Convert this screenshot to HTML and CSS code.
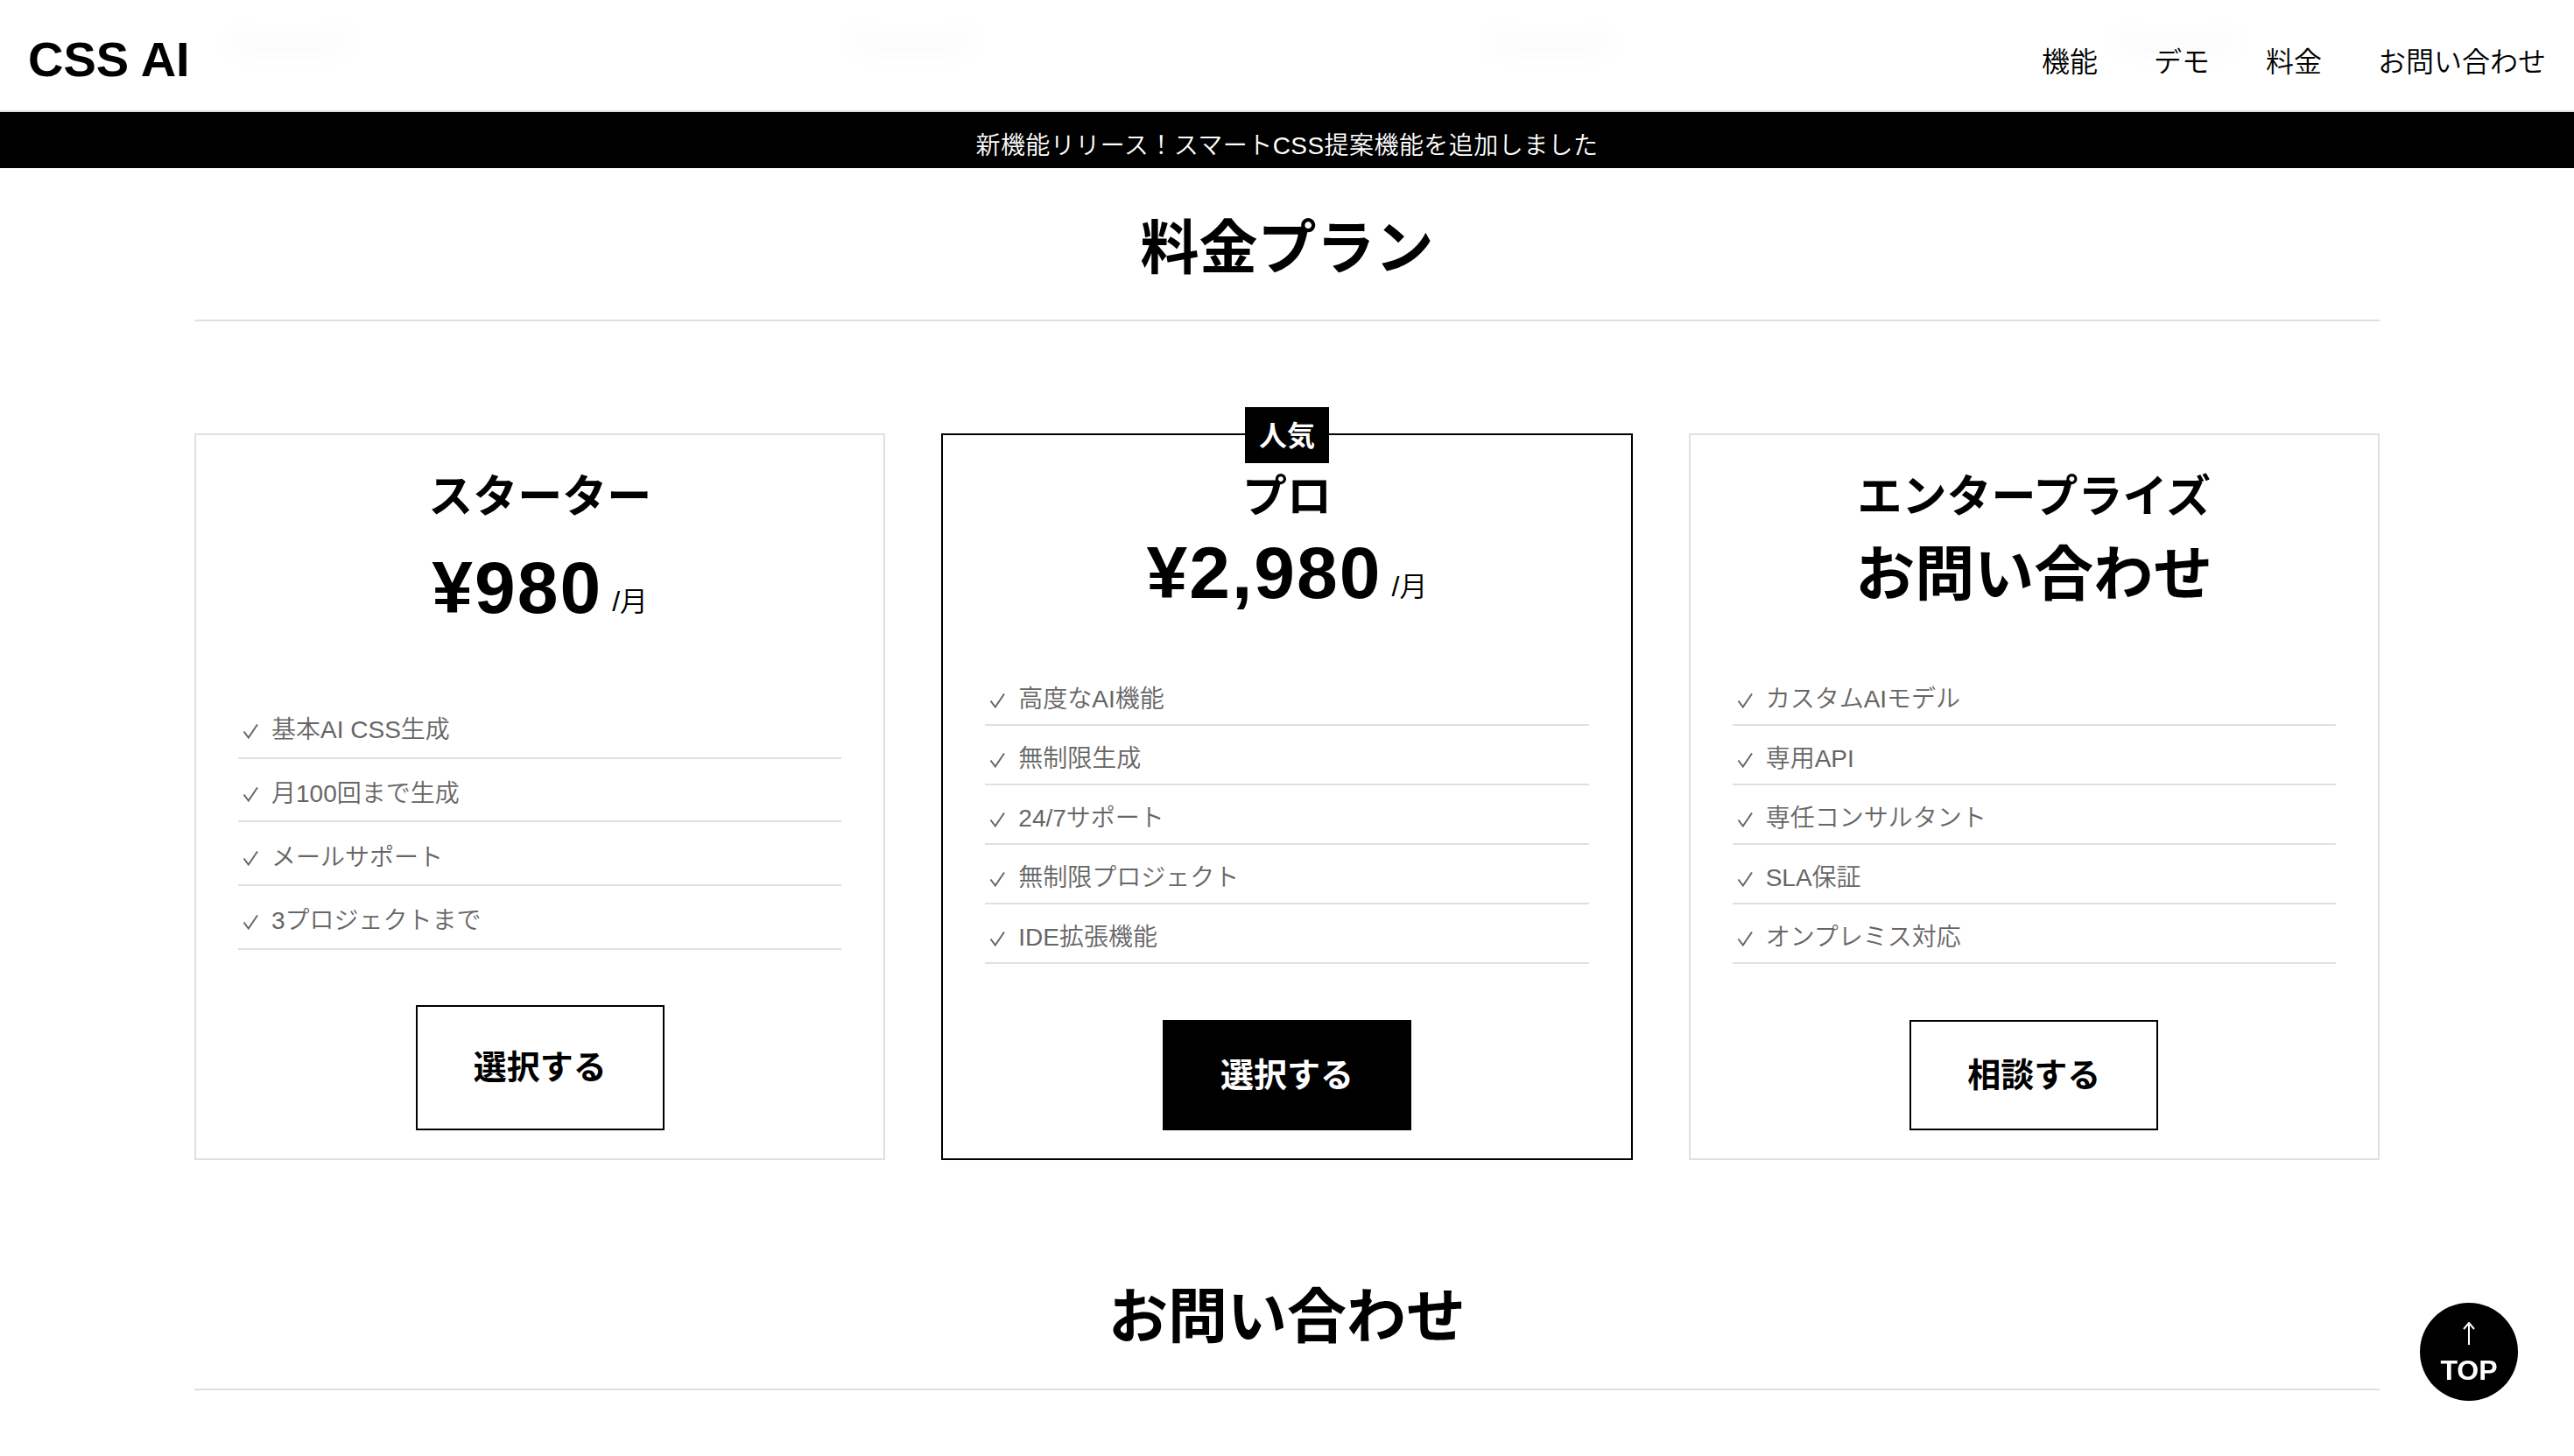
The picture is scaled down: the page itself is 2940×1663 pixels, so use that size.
FILE: index.html
```html
<!DOCTYPE html>
<html lang="ja">
<head>
  <meta charset="UTF-8" />
  <meta name="viewport" content="width=device-width, initial-scale=1.0" />
  <title>CSS AI</title>
  <link rel="stylesheet" href="styles.css">
</head>
<body>
  <svg class="defs" aria-hidden="true">
    <symbol id="check" viewBox="0 0 18 18">
      <path d="M1.5 9.5 L6.8 16.5 L17 1.5" fill="none" stroke="#666" stroke-width="2"/>
    </symbol>
  </svg>

  <header class="site-header">
    <span class="ghost ghost-1"></span>
    <span class="ghost ghost-2"></span>
    <span class="ghost ghost-3"></span>
    <span class="ghost ghost-4"></span>
    <a class="logo" href="#">CSS AI</a>
    <nav class="site-nav">
      <a href="#features">機能</a>
      <a href="#demo">デモ</a>
      <a href="#pricing">料金</a>
      <a href="#contact">お問い合わせ</a>
    </nav>
  </header>

  <div class="notice">新機能リリース！スマートCSS提案機能を追加しました</div>

  <main class="container">
    <section id="pricing">
      <h2 class="section-title section-title-tight">料金プラン</h2>
      <div class="plans">
        <article class="plan plan-sparse">
          <h3 class="plan-name">スターター</h3>
          <p class="plan-price"><span class="amount">¥980</span><small>/月</small></p>
          <ul class="features">
            <li><svg class="tick"><use href="#check"/></svg>基本AI CSS生成</li>
            <li><svg class="tick"><use href="#check"/></svg>月100回まで生成</li>
            <li><svg class="tick"><use href="#check"/></svg>メールサポート</li>
            <li><svg class="tick"><use href="#check"/></svg>3プロジェクトまで</li>
          </ul>
          <a class="plan-btn" href="#">選択する</a>
        </article>

        <article class="plan plan-popular">
          <span class="badge">人気</span>
          <h3 class="plan-name">プロ</h3>
          <p class="plan-price"><span class="amount">¥2,980</span><small>/月</small></p>
          <ul class="features">
            <li><svg class="tick"><use href="#check"/></svg>高度なAI機能</li>
            <li><svg class="tick"><use href="#check"/></svg>無制限生成</li>
            <li><svg class="tick"><use href="#check"/></svg>24/7サポート</li>
            <li><svg class="tick"><use href="#check"/></svg>無制限プロジェクト</li>
            <li><svg class="tick"><use href="#check"/></svg>IDE拡張機能</li>
          </ul>
          <a class="plan-btn plan-btn-solid" href="#">選択する</a>
        </article>

        <article class="plan">
          <h3 class="plan-name">エンタープライズ</h3>
          <p class="plan-price plan-price-text">お問い合わせ</p>
          <ul class="features">
            <li><svg class="tick"><use href="#check"/></svg>カスタムAIモデル</li>
            <li><svg class="tick"><use href="#check"/></svg>専用API</li>
            <li><svg class="tick"><use href="#check"/></svg>専任コンサルタント</li>
            <li><svg class="tick"><use href="#check"/></svg>SLA保証</li>
            <li><svg class="tick"><use href="#check"/></svg>オンプレミス対応</li>
          </ul>
          <a class="plan-btn" href="#">相談する</a>
        </article>
      </div>
    </section>

    <section id="contact" class="contact">
      <h2 class="section-title">お問い合わせ</h2>
    </section>
  </main>

  <a class="to-top" href="#">
    <svg class="to-top-arrow" viewBox="0 0 14 26" aria-hidden="true">
      <path d="M7 26 V1 M1 8 L7 1 L13 8" fill="none" stroke="#fff" stroke-width="2"/>
    </svg>
    <span>TOP</span>
  </a>
</body>
</html>
```

FILE: styles.css
```css
* {
  box-sizing: border-box;
}
html, body {
  margin: 0;
  height: 100%;
  overflow: hidden;
}
body {
  background-color: #ffffff;
  color: #000000;
  font-family: "Liberation Sans", "Noto Sans CJK JP", sans-serif;
  font-size: 32px;
  line-height: 1.6;
}
a {
  color: inherit;
  text-decoration: none;
}
.defs {
  display: none;
}

/* header */
.site-header {
  position: relative;
  display: flex;
  justify-content: space-between;
  align-items: center;
  height: 128px;
  padding: 10px 32px 0;
  border-bottom: 2px solid #e0e0e0;
}
.logo {
  font-size: 56px;
  font-weight: 700;
  line-height: 1;
}
.site-nav {
  display: flex;
  gap: 64px;
  padding-top: 8px;
  font-weight: 350;
}
.ghost {
  position: absolute;
  z-index: -1;
  top: 32px;
  width: 140px;
  height: 32px;
  border-radius: 16px;
  background-color: #fcfcfc;
  filter: blur(9px);
}
.ghost-1 { left: 260px; }
.ghost-2 { left: 972px; }
.ghost-3 { left: 1700px; }
.ghost-4 { left: 2415px; }

.notice {
  height: 64px;
  padding-top: 14px;
  background-color: #000000;
  color: #ffffff;
  font-size: 28px;
  font-weight: 350;
  line-height: 50px;
  letter-spacing: 0.45px;
  text-align: center;
}

.container {
  width: 2496px;
  margin: 0 auto;
}
.section-title {
  margin: 0;
  padding: 37px 0 27px;
  border-bottom: 2px solid #e0e0e0;
  font-size: 68px;
  font-weight: 700;
  line-height: 109px;
  text-align: center;
}
.section-title-tight {
  font-size: 67px;
}

/* pricing */
.plans {
  display: grid;
  grid-template-columns: repeat(3, 1fr);
  gap: 64px;
  margin-top: 128px;
}
.plan {
  position: relative;
  display: flex;
  flex-direction: column;
  padding: 32px 48px;
  border: 2px solid #e0e0e0;
  text-align: center;
}
.plan-popular {
  border-color: #000000;
}
.badge {
  position: absolute;
  top: -32px;
  left: 50%;
  width: 96px;
  height: 64px;
  margin-left: -48px;
  padding-top: 2px;
  background-color: #000000;
  color: #ffffff;
  font-size: 32px;
  font-weight: 700;
  line-height: 62px;
}
.plan-name {
  margin: 0;
  font-size: 51px;
  font-weight: 700;
  line-height: 77px;
}
.plan-price {
  margin: 0;
  font-size: 84px;
  font-weight: 700;
  line-height: 96px;
}
.plan-price small {
  margin-left: 11px;
  font-size: 32px;
  font-weight: 350;
  line-height: 1;
  vertical-align: 2px;
}
.amount {
  letter-spacing: 2px;
}
.plan-price-text {
  padding-top: 4px;
  font-size: 68px;
  line-height: 92px;
}
.features {
  margin: 59px 0 0;
  padding: 0;
  list-style: none;
  text-align: left;
}
.features li {
  display: flex;
  align-items: center;
  gap: 15px;
  height: 68px;
  padding: 11px 5px 0;
  border-bottom: 2px solid #e0e0e0;
  color: #666666;
  font-size: 28px;
  font-weight: 350;
}
.tick {
  flex: none;
  width: 18px;
  height: 18px;
}
.plan-btn {
  flex: 1;
  display: flex;
  justify-content: center;
  align-items: center;
  align-self: center;
  width: 284px;
  margin-top: 64px;
  border: 2px solid #000000;
  font-size: 38px;
  font-weight: 700;
}
.plan-btn-solid {
  background-color: #000000;
  color: #ffffff;
}

/* starter card has one row less, the rest stretches */
.plan-sparse .plan-price {
  margin-top: 17px;
}
.plan-sparse .features {
  margin-top: 75px;
}
.plan-sparse .features li {
  height: 72.67px;
}
.plan-sparse .plan-btn {
  margin-top: 63px;
}
.plans > .plan:not(.plan-sparse) .plan-btn {
  min-height: 126px;
}

.contact {
  margin-top: 88px;
}

.to-top {
  position: fixed;
  right: 64px;
  bottom: 63px;
  display: flex;
  flex-direction: column;
  align-items: center;
  width: 112px;
  height: 112px;
  padding-top: 22px;
  border-radius: 50%;
  background-color: #000000;
  color: #ffffff;
  font-size: 32px;
  font-weight: 700;
  line-height: 40px;
}
.to-top-arrow {
  flex: none;
  width: 14px;
  height: 26px;
  margin-bottom: 9px;
}
```
